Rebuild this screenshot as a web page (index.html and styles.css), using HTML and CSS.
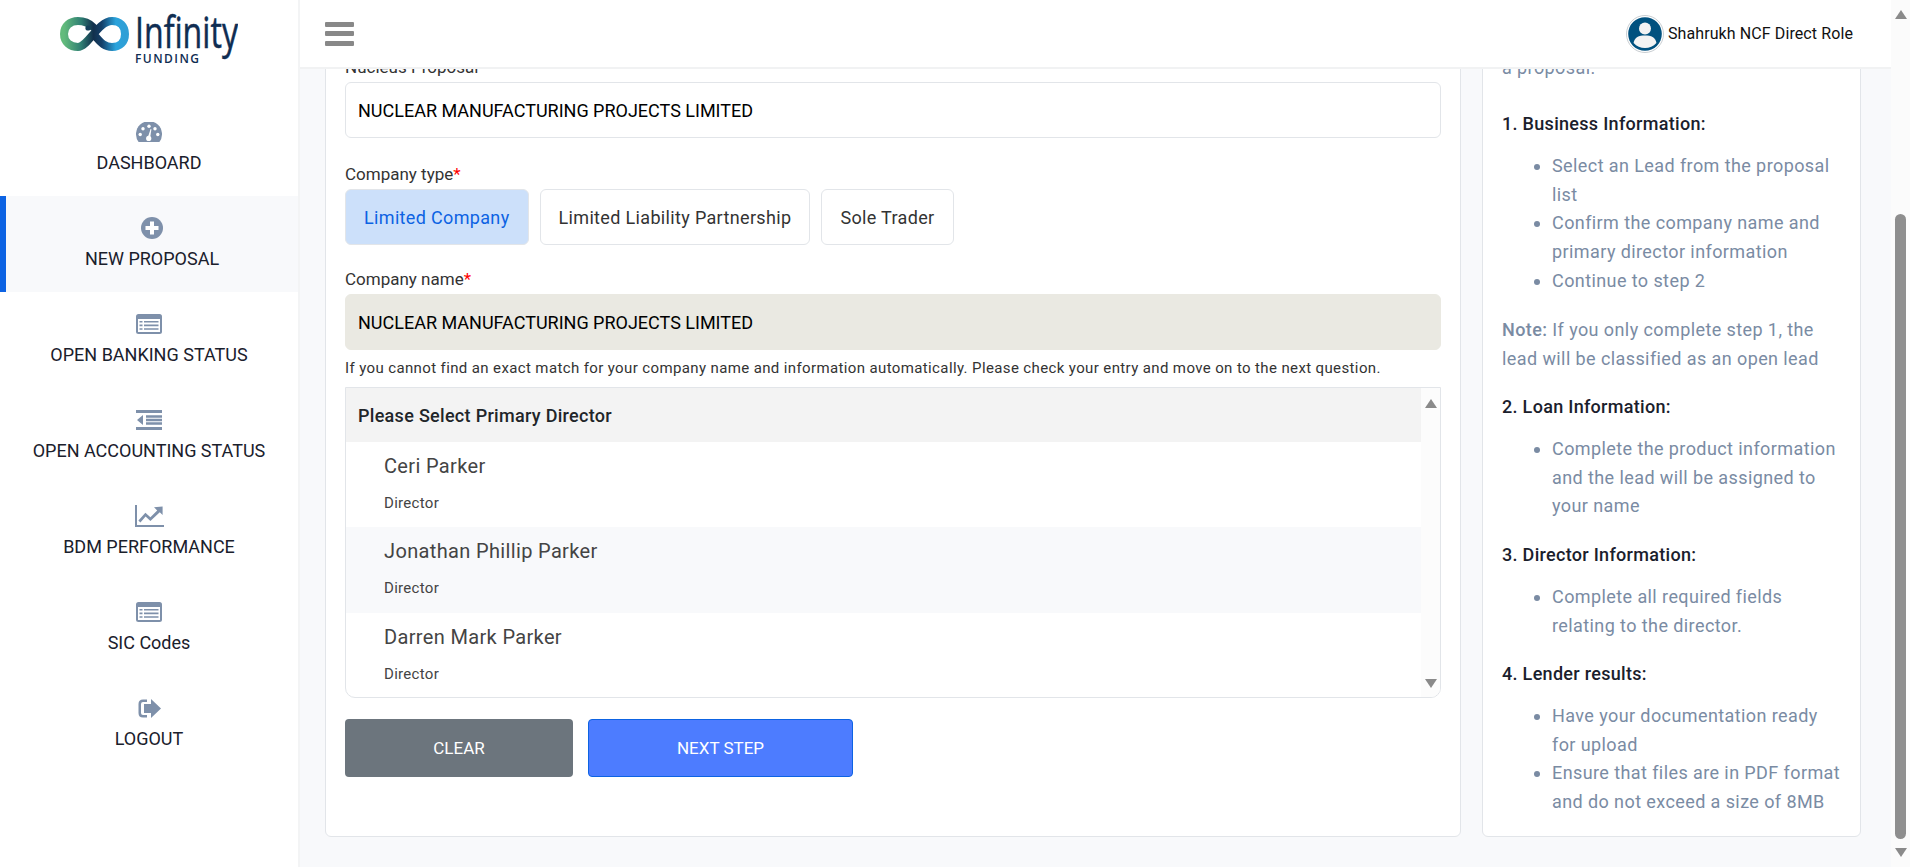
FILE: index.html
```html
<!DOCTYPE html>
<html lang="en">
<head>
  <meta charset="UTF-8">
  <title>New Proposal</title>
  <link rel="stylesheet" href="styles.css">
</head>
<body>
  <aside class="sidebar">
    <div class="logo">
      <svg width="178" height="54" viewBox="0 0 178 54">
        <defs>
          <linearGradient id="loop" x1="0" y1="0" x2="1" y2="0">
            <stop offset="0" stop-color="#62bb7c"/>
            <stop offset="0.28" stop-color="#2f7f73"/>
            <stop offset="0.48" stop-color="#12304c"/>
            <stop offset="0.62" stop-color="#14406a"/>
            <stop offset="0.85" stop-color="#2aa3dc"/>
            <stop offset="1" stop-color="#2f9fd6"/>
          </linearGradient>
        </defs>
        <path class="loop" d="M33 14 C28 9 24 8 18 8 C10 8 4 13 4 21 C4 29 10 34 18 34 C28 34 38 8 52 8 C60 8 65 13 65 21 C65 29 60 34 52 34 C45 34 41 30 36 24" />
        <circle cx="28" cy="15" r="2.6" fill="#14405a"/>
        <text class="logo-name" x="75" y="35" textLength="103" lengthAdjust="spacingAndGlyphs">Infinity</text>
        <text class="logo-sub" x="75" y="50" textLength="64">FUNDING</text>
      </svg>
    </div>
    <nav>
      <a class="nav-item">
        <span class="nav-icon">
          <svg width="26" height="20" viewBox="0 0 26 20">
            <path class="ic" d="M2.6 20 A13 13 0 1 1 23.4 20 Z"/>
            <g fill="#fff"><circle cx="13" cy="4.2" r="1.7"/><circle cx="7" cy="6.8" r="1.7"/><circle cx="4.2" cy="12.5" r="1.7"/><circle cx="21.8" cy="12.5" r="1.7"/><circle cx="19" cy="6.8" r="1.7"/><circle cx="12.7" cy="16.4" r="2.6"/><path d="M11.6 16 L14.6 7 L15.4 7.2 L14 16.8 Z"/></g>
          </svg>
        </span>
        <span>DASHBOARD</span>
      </a>
      <a class="nav-item active">
        <span class="nav-icon">
          <svg width="22" height="22" viewBox="0 0 22 22">
            <circle class="ic" cx="11" cy="11" r="11"/>
            <path fill="#fff" d="M9 4.5 H13 V9 H17.5 V13 H13 V17.5 H9 V13 H4.5 V9 H9 Z"/>
          </svg>
        </span>
        <span>NEW PROPOSAL</span>
      </a>
      <a class="nav-item">
        <span class="nav-icon">
          <svg width="26" height="20" viewBox="0 0 26 20">
            <rect class="ic" width="26" height="20" rx="2.5"/>
            <rect fill="#fff" x="2" y="5" width="22" height="13"/>
            <path class="ic" d="M3.5 7 H6.5 V8.6 H3.5 Z M8 7 H22.5 V8.6 H8 Z M3.5 10.6 H6.5 V12.2 H3.5 Z M8 10.6 H22.5 V12.2 H8 Z M3.5 14.2 H6.5 V15.8 H3.5 Z M8 14.2 H22.5 V15.8 H8 Z"/>
          </svg>
        </span>
        <span>OPEN BANKING STATUS</span>
      </a>
      <a class="nav-item">
        <span class="nav-icon">
          <svg width="26" height="20" viewBox="0 0 26 20">
            <path class="ic" d="M0 0 H26 V3 H0 Z M0 17 H26 V20 H0 Z M10 5.2 H26 V7.8 H10 Z M10 8.8 H26 V11.2 H10 Z M10 12.2 H26 V14.8 H10 Z M1 10 L7 5 V15 Z"/>
          </svg>
        </span>
        <span>OPEN ACCOUNTING STATUS</span>
      </a>
      <a class="nav-item">
        <span class="nav-icon">
          <svg width="29" height="22" viewBox="0 0 29 22">
            <path class="ic" d="M0 0 H2 V20 H29 V22 H0 Z M19 2.2 L27.6 1.6 L27.6 10 L24.8 7.2 L15.4 16 L10.6 11.6 L5.4 17.4 L3.4 15.6 L10.4 7.8 L15.4 12.2 L22.2 5.4 Z"/>
          </svg>
        </span>
        <span>BDM PERFORMANCE</span>
      </a>
      <a class="nav-item">
        <span class="nav-icon">
          <svg width="26" height="20" viewBox="0 0 26 20">
            <rect class="ic" width="26" height="20" rx="2.5"/>
            <rect fill="#fff" x="2" y="5" width="22" height="13"/>
            <path class="ic" d="M3.5 7 H6.5 V8.6 H3.5 Z M8 7 H22.5 V8.6 H8 Z M3.5 10.6 H6.5 V12.2 H3.5 Z M8 10.6 H22.5 V12.2 H8 Z M3.5 14.2 H6.5 V15.8 H3.5 Z M8 14.2 H22.5 V15.8 H8 Z"/>
          </svg>
        </span>
        <span>SIC Codes</span>
      </a>
      <a class="nav-item">
        <span class="nav-icon">
          <svg width="23" height="19" viewBox="0 0 23 19">
            <path class="ic" d="M13 0 L23 9.5 L13 19 V14 H6 V5 H13 Z M9 0.5 V3 H5 Q3 3 3 5 V14 Q3 16 5 16 H9 V18.5 H5 Q0.5 18.5 0.5 14 V5 Q0.5 0.5 5 0.5 Z"/>
          </svg>
        </span>
        <span>LOGOUT</span>
      </a>
    </nav>
  </aside>

  <div class="page">
    <header class="topbar">
      <div class="burger"><i></i><i></i><i></i></div>
      <div class="user">
        <svg width="38" height="38" viewBox="0 0 38 38">
          <circle cx="19" cy="19" r="18.5" fill="#fff" stroke="#c9ced2"/>
          <circle cx="19" cy="19" r="16.8" fill="#00517f"/>
          <circle cx="19" cy="13.6" r="6" fill="#f3f3f3"/>
          <path fill="#f3f3f3" d="M7.6 28 C8.4 22.4 13 20.6 19 20.6 C25 20.6 29.6 22.4 30.4 28 C27.4 31.6 23.4 33 19 33 C14.6 33 10.6 31.6 7.6 28 Z"/>
        </svg>
        <span>Shahrukh NCF Direct Role</span>
      </div>
    </header>

    <main class="content">
      <section class="card form-card">
        <label class="label label-top">Nucleus Proposal</label>
        <div class="field">NUCLEAR MANUFACTURING PROJECTS LIMITED</div>

        <label class="label label-type">Company type<b>*</b></label>
        <div class="types">
          <button class="type selected">Limited Company</button>
          <button class="type">Limited Liability Partnership</button>
          <button class="type">Sole Trader</button>
        </div>

        <label class="label label-name">Company name<b>*</b></label>
        <div class="field readonly">NUCLEAR MANUFACTURING PROJECTS LIMITED</div>
        <p class="help">If you cannot find an exact match for your company name and information automatically. Please check your entry and move on to the next question.</p>

        <div class="directors">
          <div class="directors-list">
            <div class="directors-head">Please Select Primary Director</div>
            <div class="director">
              <div class="director-name">Ceri Parker</div>
              <div class="director-role">Director</div>
            </div>
            <div class="director alt">
              <div class="director-name">Jonathan Phillip Parker</div>
              <div class="director-role">Director</div>
            </div>
            <div class="director">
              <div class="director-name">Darren Mark Parker</div>
              <div class="director-role">Director</div>
            </div>
          </div>
          <div class="list-scroll">
            <span class="arrow-up"></span>
            <span class="arrow-down"></span>
          </div>
        </div>

        <div class="actions">
          <button class="btn btn-clear">CLEAR</button>
          <button class="btn btn-next">NEXT STEP</button>
        </div>
      </section>

      <section class="card help-card">
        <p class="intro">a proposal.</p>
        <h4>1. Business Information:</h4>
        <ul>
          <li>Select an Lead from the proposal list</li>
          <li>Confirm the company name and primary director information</li>
          <li>Continue to step 2</li>
        </ul>
        <p><strong>Note:</strong> If you only complete step 1, the lead will be classified as an open lead</p>
        <h4>2. Loan Information:</h4>
        <ul>
          <li>Complete the product information and the lead will be assigned to your name</li>
        </ul>
        <h4>3. Director Information:</h4>
        <ul>
          <li>Complete all required fields relating to the director.</li>
        </ul>
        <h4>4. Lender results:</h4>
        <ul>
          <li>Have your documentation ready for upload</li>
          <li>Ensure that files are in PDF format and do not exceed a size of 8MB</li>
        </ul>
      </section>
    </main>
  </div>

  <div class="page-scroll">
    <span class="arrow-up"></span>
    <div class="thumb"></div>
    <span class="arrow-down"></span>
  </div>
</body>
</html>
```

FILE: styles.css
```css
* {
  box-sizing: border-box;
}
body {
  margin: 0;
  height: 100vh;
  display: flex;
  overflow: hidden;
  background: #f8f9fb;
  font-family: Roboto, Arial, sans-serif;
  font-size: 18px;
  color: #212529;
}

/* sidebar */
.sidebar {
  width: 300px;
  flex: none;
  background: #fff;
  border-right: 2px solid #f3f4f5;
}
.logo {
  height: 100px;
  padding-top: 13px;
  display: flex;
  justify-content: center;
  align-items: flex-start;
}
.loop {
  fill: none;
  stroke: url(#loop);
  stroke-width: 8;
  stroke-linecap: round;
}
.logo-name {
  font-family: "Open Sans", sans-serif;
  font-size: 43px;
  fill: #0f2d52;
  stroke: #0f2d52;
  stroke-width: 0.5;
}
.logo-sub {
  font-family: "Open Sans", sans-serif;
  font-size: 12px;
  font-weight: 600;
  fill: #0f2d52;
}
.nav-item {
  height: 96px;
  padding-top: 20px;
  display: block;
  text-align: center;
  line-height: 24px;
  color: #1a202c;
}
.nav-item.active {
  background: #f8f9fb;
  border-left: 6px solid #0d63e3;
}
.nav-icon {
  height: 24px;
  margin-bottom: 7px;
  display: flex;
  justify-content: center;
  align-items: center;
}
.ic {
  fill: #7e90aa;
}

/* top bar */
.page {
  flex: 1;
  min-width: 0;
  display: flex;
  flex-direction: column;
}
.topbar {
  height: 69px;
  flex: none;
  background: #fff;
  border-bottom: 2px solid #f1f2f3;
  padding: 0 38px 0 25px;
  display: flex;
  justify-content: space-between;
  align-items: center;
}
.burger {
  width: 29px;
  display: flex;
  flex-direction: column;
  gap: 4.5px;
}
.burger i {
  height: 5px;
  border-radius: 1px;
  background: #888;
}
.user {
  display: flex;
  align-items: center;
  gap: 4px;
  font-size: 16px;
  color: #111;
  letter-spacing: 0.1px;
}

/* content, bottom aligned as the page is scrolled */
.content {
  flex: 1;
  min-height: 0;
  overflow: hidden;
  padding: 0 30px 30px 25px;
  display: flex;
  gap: 21px;
  align-items: flex-end;
}
.card {
  background: #fff;
  border: 1px solid #e2e5e9;
  border-radius: 6px;
}
.form-card {
  width: 1136px;
  flex: none;
  padding: 0 19px 59px;
  height: 800px;
  display: flex;
  flex-direction: column;
  justify-content: flex-end;
}
.label {
  display: block;
  line-height: 24px;
  margin-bottom: 3px;
  color: #333;
  font-size: 17px;
}
.label b {
  color: #f00;
  font-weight: 400;
}
.label-type {
  margin-top: 24px;
}
.label-name {
  margin-top: 22px;
}
.field {
  height: 56px;
  padding: 0 12px;
  display: flex;
  align-items: center;
  border: 1px solid #e2e5e9;
  border-radius: 6px;
  color: #000;
}
.field.readonly {
  background: #eae9e2;
  border-color: #eae9e2;
}
.types {
  display: flex;
  gap: 11px;
}
.type {
  height: 56px;
  padding: 0 18px;
  background: #fff;
  border: 1px solid #e2e5e9;
  border-radius: 6px;
  font: inherit;
  letter-spacing: 0.34px;
  color: #333;
}
.type.selected {
  background: #cce0fa;
  color: #0d63e3;
}
.help {
  margin: 8px 0 9px;
  line-height: 20px;
  font-size: 15px;
  letter-spacing: 0.376px;
  color: #333;
}
.directors {
  height: 311px;
  display: flex;
  border: 1px solid #e2e5e9;
  border-radius: 0 0 10px 10px;
  overflow: hidden;
}
.directors-list {
  flex: 1;
}
.directors-head {
  height: 54px;
  padding: 0 12px;
  display: flex;
  align-items: center;
  background: #f3f3f3;
  font-weight: 500;
  letter-spacing: 0.3px;
}
.director {
  height: 85.3px;
  padding: 9px 38px 0;
}
.director.alt {
  background: #f8f9fb;
}
.director-name {
  line-height: 30px;
  font-size: 20px;
  letter-spacing: 0.35px;
  color: #444;
}
.director-role {
  margin-top: 12px;
  line-height: 20px;
  font-size: 15px;
  letter-spacing: 0.3px;
  color: #444;
}
.list-scroll {
  width: 19px;
  flex: none;
  background: #fcfcfc;
  padding: 11px 0 9px;
  display: flex;
  flex-direction: column;
  justify-content: space-between;
  align-items: center;
}
.arrow-up,
.arrow-down {
  width: 0;
  height: 0;
  border-left: 6px solid transparent;
  border-right: 6px solid transparent;
}
.arrow-up {
  border-bottom: 9px solid #8a8a8a;
}
.arrow-down {
  border-top: 9px solid #8a8a8a;
}
.actions {
  margin-top: 21px;
  display: flex;
  gap: 15px;
}
.btn {
  height: 58px;
  border-radius: 4px;
  border: 1px solid transparent;
  font: inherit;
  font-size: 17px;
  color: #fff;
}
.btn-clear {
  width: 228px;
  background: #6c757d;
}
.btn-next {
  width: 265px;
  background: #4d7cff;
  border-color: #0d63e3;
}

/* help card */
.help-card {
  width: 379px;
  flex: none;
  height: 800px;
  padding: 0 19px 19px;
  display: flex;
  flex-direction: column;
  justify-content: flex-end;
  line-height: 28.8px;
  letter-spacing: 0.41px;
  color: #7a8ba3;
}
.help-card p,
.help-card ul {
  margin: 0 0 20px;
}
.help-card .intro {
  margin-bottom: 28px;
}
.help-card ul:last-child {
  margin-bottom: 0;
}
.help-card ul {
  padding-left: 50px;
}
.help-card h4 {
  margin: 0 0 12.7px;
  font-size: 18px;
  font-weight: 500;
  line-height: 28.8px;
  letter-spacing: 0.3px;
  color: #1a202c;
}
.help-card strong {
  font-weight: 500;
}

/* page scrollbar */
.page-scroll {
  width: 19px;
  flex: none;
  background: #fbfbfb;
  padding: 10px 0;
  display: flex;
  flex-direction: column;
  align-items: center;
}
.thumb {
  width: 11px;
  height: 625px;
  margin: auto 0 9px;
  border-radius: 6px;
  background: #8e8e8e;
}
```
